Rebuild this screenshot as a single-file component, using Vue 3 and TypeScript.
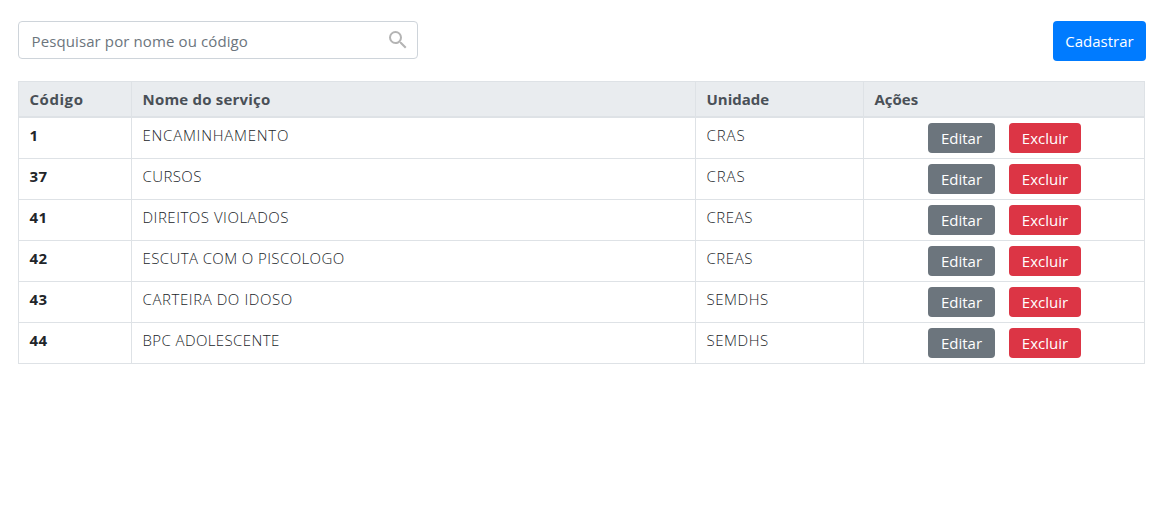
<script setup lang="ts">
interface Service {
  code: number
  name: string
  unit: string
}

const services: Service[] = [
  { code: 1, name: 'ENCAMINHAMENTO', unit: 'CRAS' },
  { code: 37, name: 'CURSOS', unit: 'CRAS' },
  { code: 41, name: 'DIREITOS VIOLADOS', unit: 'CREAS' },
  { code: 42, name: 'ESCUTA COM O PISCOLOGO', unit: 'CREAS' },
  { code: 43, name: 'CARTEIRA DO IDOSO', unit: 'SEMDHS' },
  { code: 44, name: 'BPC ADOLESCENTE', unit: 'SEMDHS' },
]
</script>

<template>
  <main class="page">
    <div class="toolbar">
      <label class="search">
        <input type="text" placeholder="Pesquisar por nome ou código" />
        <svg width="24" height="24" viewBox="0 0 24 24" fill="#b4b4b4">
          <path d="M15.5 14h-.79l-.28-.27A6.471 6.471 0 0 0 16 9.5 6.5 6.5 0 1 0 9.5 16c1.61 0 3.09-.59 4.23-1.57l.27.28v.79l5 4.99L20.49 19l-4.99-5zm-6 0C7.01 14 5 11.99 5 9.5S7.01 5 9.5 5 14 7.01 14 9.5 11.99 14 9.5 14z" />
        </svg>
      </label>
      <button class="btn primary">Cadastrar</button>
    </div>
    <table>
      <colgroup>
        <col class="c-code" /><col class="c-name" /><col class="c-unit" /><col class="c-actions" />
      </colgroup>
      <thead>
        <tr>
          <th class="h-code">Código</th>
          <th class="h-name">Nome do serviço</th>
          <th>Unidade</th>
          <th>Ações</th>
        </tr>
      </thead>
      <tbody>
        <tr v-for="s in services" :key="s.code">
          <td class="code">{{ s.code }}</td>
          <td class="name">{{ s.name }}</td>
          <td class="unit">{{ s.unit }}</td>
          <td class="actions">
            <div class="group">
              <button class="btn secondary">Editar</button>
              <button class="btn danger">Excluir</button>
            </div>
          </td>
        </tr>
      </tbody>
    </table>
  </main>
</template>

<style>
body {
  background: #fff;
}
</style>

<style scoped>
.page {
  box-sizing: border-box;
  height: 507px;
  padding: 21px 22px 0 18px;
  overflow: hidden;
  font-family: 'Open Sans', 'Noto Sans', sans-serif;
  font-size: 15px;
  color: #212529;
}
.toolbar {
  display: flex;
  justify-content: space-between;
  align-items: flex-start;
  height: 60px;
}
.search {
  box-sizing: border-box;
  display: flex;
  align-items: center;
  width: 400px;
  height: 38px;
  padding: 0 7px 0 12px;
  border: 1px solid #ced4da;
  border-radius: 4px;
}
.search input {
  flex: 1;
  min-width: 0;
  height: 24px;
  padding: 2px 0 0 0.5px;
  box-sizing: border-box;
  border: 0;
  outline: 0;
  background: none;
  font: inherit;
  letter-spacing: 0.11px;
}
.search input::placeholder {
  color: #6c757d;
  opacity: 1;
}
.search svg {
  flex: none;
}
.btn {
  box-sizing: border-box;
  padding: 0 0 1px;
  border: 0;
  border-radius: 4px;
  color: #fff;
  font: inherit;
  font-weight: 400;
  line-height: 20px;
  text-align: center;
  white-space: nowrap;
}
.primary {
  width: 93px;
  height: 40px;
  background: #007bff;
}
.secondary {
  width: 67px;
  height: 30px;
  padding-left: 1px;
  background: #6c757d;
}
.danger {
  width: 72px;
  height: 30px;
  padding-left: 1px;
  background: #dc3545;
}
table {
  width: 1127px;
  table-layout: fixed;
  border-collapse: separate;
  border-spacing: 0;
  border-top: 1px solid #dee2e6;
  border-left: 1px solid #dee2e6;
}
.c-code {
  width: 113px;
}
.c-name {
  width: 564px;
}
.c-unit {
  width: 168px;
}
.c-actions {
  width: 281px;
}
th,
td {
  box-sizing: border-box;
  border-right: 1px solid #dee2e6;
  border-bottom: 1px solid #dee2e6;
  text-align: left;
  vertical-align: top;
  white-space: nowrap;
}
th {
  height: 36px;
  padding: 5px 10.5px 0;
  border-bottom-width: 2px;
  background: #e9ecef;
  color: #495057;
  font-weight: 700;
  line-height: 24px;
}
.h-code {
  letter-spacing: 0.55px;
}
.h-name {
  letter-spacing: 0.2px;
}
td {
  height: 41px;
  padding: 5px 10.5px 0;
  font-weight: 300;
  line-height: 24px;
  letter-spacing: 0.4px;
}
td.code {
  font-weight: 700;
}
tr:nth-child(1) .name {
  letter-spacing: 0.75px;
}
tr:nth-child(3) .name {
  letter-spacing: 0.52px;
}
tr:nth-child(5) .name {
  letter-spacing: 0.58px;
}
tr:nth-child(-n + 2) .unit {
  letter-spacing: 0.9px;
}
tr:nth-child(n + 3) .unit {
  letter-spacing: 0.55px;
}
td.actions {
  padding: 5px 0 0;
  letter-spacing: 0;
}
.group {
  display: flex;
  justify-content: center;
  gap: 14px;
}
</style>
